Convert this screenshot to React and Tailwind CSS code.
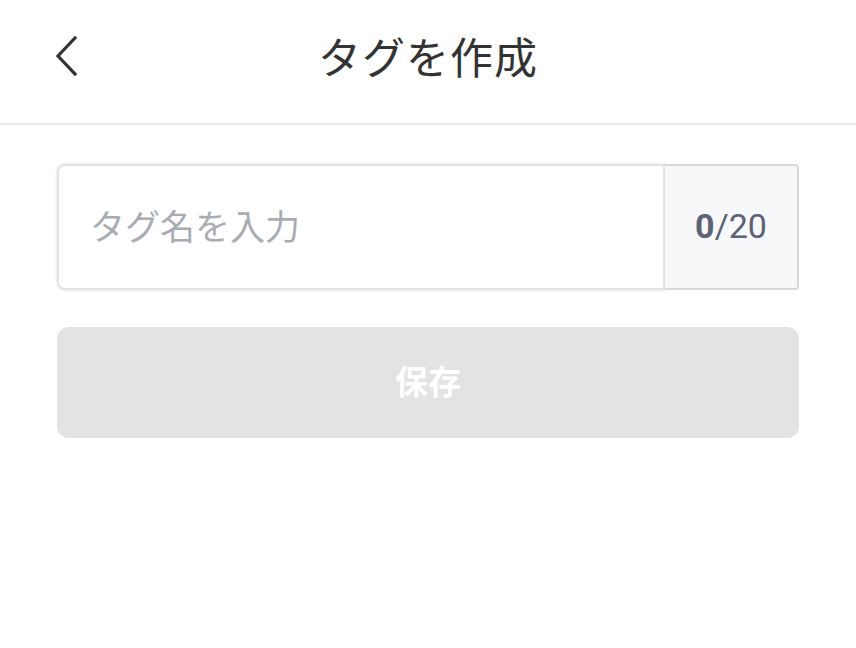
export default function App() {
  return (
    <div
      className="flex min-h-[648px] w-[856px] flex-col bg-white"
      style={{ fontFamily: '"Noto Sans CJK JP", Roboto, sans-serif' }}
    >
      <header className="relative flex h-[125px] items-center justify-center border-b-2 border-[#e6e6e6]">
        <button className="absolute left-[48px] top-[34px] flex h-[44px] w-[36px] items-center justify-center text-[#333]">
          <svg width="30" height="42" viewBox="0 0 30 42" fill="none">
            <path d="M24 3 L7 21 L24 39" stroke="#333" strokeWidth="3.2" strokeLinecap="square" />
          </svg>
        </button>
        <h1 className="-mt-[12px] text-[43px] font-normal leading-none tracking-[1px] text-[#333]">タグを作成</h1>
      </header>

      <main className="flex flex-col gap-[37px] px-[57px] pt-[39px]">
        <div className="flex h-[126px]">
          <div className="flex flex-1 items-center rounded-l-[8px] border-2 border-[#e2e2e2] pl-[31px] shadow-[0_0_2px_1px_#ececec]">
            <span className="-mt-[6px] text-[35px] leading-none text-[#a9adb3]">タグ名を入力</span>
          </div>
          <div className="flex w-[134px] items-center justify-center rounded-r-[4px] border-2 border-l-0 border-[#d6d8dc] bg-[#f7f8fa]">
            <span className="-mt-[3px] text-[34px] leading-none text-[#5d6275]" style={{ fontFamily: 'Roboto, sans-serif' }}>
              <span className="font-bold">0</span>/20
            </span>
          </div>
        </div>

        <button className="flex h-[111px] items-center justify-center rounded-[12px] bg-[#e3e3e3]">
          <span className="-mt-[4px] text-[33px] font-bold leading-none text-white">保存</span>
        </button>
      </main>
    </div>
  )
}
